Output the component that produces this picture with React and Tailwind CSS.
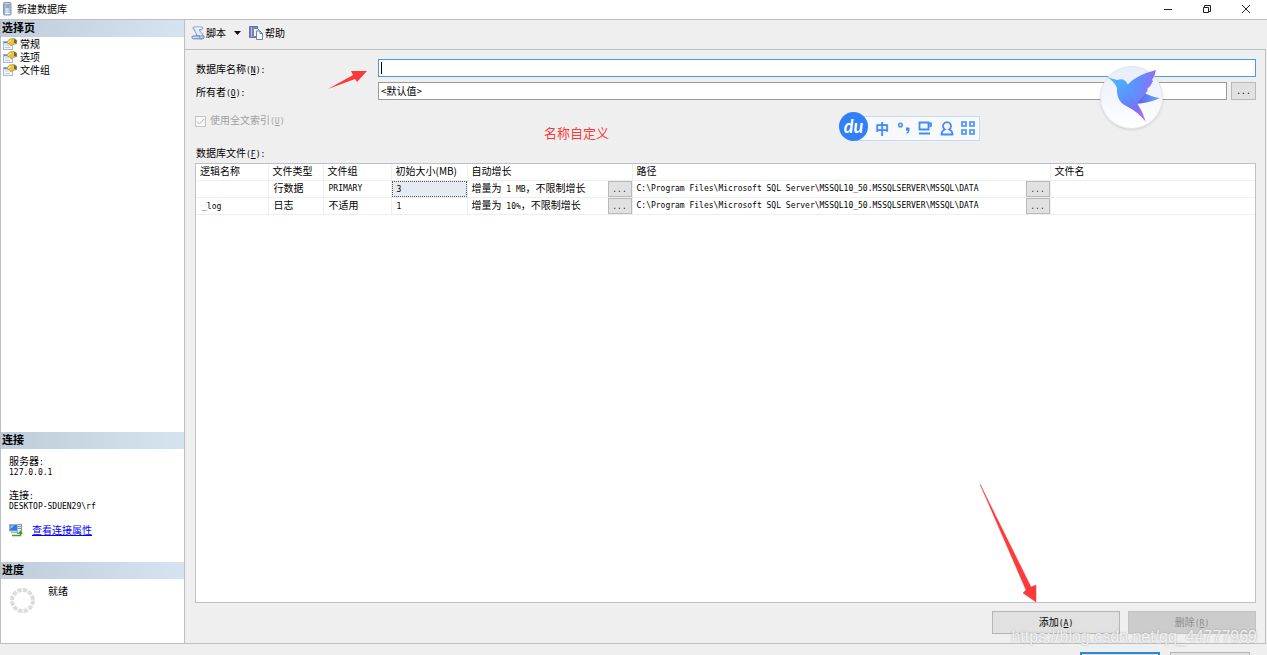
import React from 'react';

const pages = ['常规', '选项', '文件组'];

const columns = [
    { title: '逻辑名称', width: 'w-[72px]' },
    { title: '文件类型', width: 'w-[55px]' },
    { title: '文件组', width: 'w-[68px]' },
    { title: '初始大小(MB)', width: 'w-[76px]' },
    { title: '自动增长', width: 'w-[165px]' },
    { title: '路径', width: 'w-[418px]' },
    { title: '文件名', width: '' },
];

const path = 'C:\\Program Files\\Microsoft SQL Server\\MSSQL10_50.MSSQLSERVER\\MSSQL\\DATA';

const files = [
    { id: 1, name: '', type: '行数据', group: 'PRIMARY', latinGroup: true, size: 3, amount: '1 MB', selected: true },
    { id: 2, name: '_log', type: '日志', group: '不适用', latinGroup: false, size: 1, amount: '10%', selected: false },
];

// Latin text sits on half-width cells next to the full-width glyphs
function Mono({ children }) {
    return <span className="font-['DejaVu_Sans_Mono','Liberation_Mono',monospace] text-[8px]">{children}</span>;
}

function Hotkey({ letter }) {
    return <Mono>(<u>{letter}</u>)</Mono>;
}

function ServerIcon() {
    return (
        <svg width="9" height="14" viewBox="0 0 9 14">
            <defs>
                <linearGradient id="tower" x1="0" x2="1">
                    <stop offset="0" stopColor="#6d8bad" />
                    <stop offset="0.35" stopColor="#dbe8f4" />
                    <stop offset="1" stopColor="#9db4d2" />
                </linearGradient>
            </defs>
            <rect x="0.5" y="0.5" width="7.5" height="12.5" rx="1" fill="url(#tower)" stroke="#8299b8" />
            <path d="M2.5 3h4M2.5 5h4" stroke="#5f7fa8" />
            <path d="M2 11.5h5" stroke="#f4f8fc" />
        </svg>
    );
}

function PageIcon() {
    return (
        <svg width="14" height="12" viewBox="0 0 14 12">
            <rect x="0.5" y="3.5" width="9" height="8" fill="#f6f9fd" stroke="#a9b8cf" />
            <path d="M1 4.5h5" stroke="#5b86c4" strokeWidth="1.5" />
            <path d="M2 7h4M2 9.5h5" stroke="#b4c8e6" />
            <path d="M3.500 4.500 6.500 1l4.500-.5 2.500 1.500v3.500L10 6.500 8 8 6.500 6z" fill="#efc13d" stroke="#b08d35" strokeWidth="0.7" />
            <path d="M11 .7l2.600 1.500v3.500l-2.600-.7z" fill="#5c7045" />
            <path d="M5 4.500 8 2" stroke="#fff1a8" />
        </svg>
    );
}

function ScriptIcon() {
    return (
        <svg width="14" height="14" viewBox="0 0 14 14">
            <path d="M3 1h7.500c1.800 0 1.500 2.500 0 2.500H8.500C8.500 6 12 7 12 10H5.500C6 7 3.500 6 3.500 3.500 1.500 3.500 1.500 1 3 1z" fill="#dfeaf9" stroke="#7d97c6" />
            <path d="M2 10h7c-.8 1 0 2.800 1.500 2.800H2.500C.5 12.800.5 10 2 10z" fill="#cfdef2" stroke="#6581b2" />
            <path d="M12 9.500c1.800.3 1.500 3.300-.5 3.300H9.500" fill="#a9c0e2" stroke="#6581b2" />
            <path d="M4 2.200h6" stroke="#fff" />
        </svg>
    );
}

function HelpIcon() {
    return (
        <svg width="14" height="14" viewBox="0 0 14 14">
            <path d="M.5.500h8v11h-8z" fill="#7d7fbd" stroke="#6d70aa" />
            <path d="M2.500 1v10" stroke="#b4b6df" />
            <path d="M4.500 2.500h4l2 2v6h-6z" fill="#eef3fb" stroke="#7587b6" />
            <path d="M7.500 5h3.500l2.500 2.500v6h-6z" fill="#fff" stroke="#6c80ad" />
            <path d="M11 5v2.500h2.500" fill="none" stroke="#6c80ad" />
        </svg>
    );
}

function ConnectionIcon() {
    return (
        <svg width="14" height="14" viewBox="0 0 14 14">
            <rect x="8.500" y="1.500" width="4" height="9" fill="#e8edf3" stroke="#8794a6" />
            <path d="M9 3.500h3M9 5.500h3" stroke="#8794a6" />
            <rect x="0.500" y="1.500" width="8" height="6.500" fill="#2e7be0" stroke="#9db4cf" />
            <path d="M1.500 2.500h4l-4 3.500z" fill="#8fc0fa" />
            <path d="M2 9.500h6" stroke="#a9b4c2" strokeWidth="1.500" />
            <path d="M3 12.500h8.500V9M10 10.500 11.500 8.500 13 10.500" fill="none" stroke="#3aa527" strokeWidth="1.500" />
        </svg>
    );
}

function Bird() {
    return (
        <svg className="absolute -top-px left-0" width="64" height="64" viewBox="0 0 64 64">
            <defs>
                <linearGradient id="body" gradientUnits="userSpaceOnUse" x1="16" y1="12" x2="44" y2="56">
                    <stop offset="0" stopColor="#4fb2fd" />
                    <stop offset="0.45" stopColor="#5f8dfd" />
                    <stop offset="0.7" stopColor="#7e6cf8" />
                    <stop offset="1" stopColor="#d46ef2" />
                </linearGradient>
                <linearGradient id="wing" gradientUnits="userSpaceOnUse" x1="24" y1="20" x2="52" y2="24">
                    <stop offset="0" stopColor="#52a2fd" />
                    <stop offset="0.5" stopColor="#648bfc" />
                    <stop offset="1" stopColor="#8f6ff6" />
                </linearGradient>
                <linearGradient id="tail" x1="0" x2="1">
                    <stop offset="0" stopColor="#6652ea" />
                    <stop offset="1" stopColor="#5ab0fb" />
                </linearGradient>
            </defs>
            <path d="M34 37 42 26Q50 31 59 32 49 37 34 38z" fill="url(#tail)" />
            <path d="M6 11Q12 13 16 14 24 11 27 19L44 24 36 37Q42 46 45 56 37 46 27 41 15 36 16 22 14 16 6 11z" fill="url(#body)" />
            <path d="M26 19Q35 9 55 4 54 10 51 14L52 15Q50 20 46 23L47 24Q42 31 36 37 28 31 26 19z" fill="url(#wing)" />
        </svg>
    );
}

function SectionTitle({ children }) {
    return (
        <h2 className="h-[17px] shrink-0 bg-linear-to-r from-[#bfccd9] to-[#d6e4f2] pl-px text-[11px] leading-[14px] font-bold">
            {children}
        </h2>
    );
}

function MoreButton() {
    return (
        <button type="button" aria-label="更多" className="h-4 w-6 shrink-0 border border-[#b9b9b9] bg-[#e1e1e1] leading-3 text-[#333]">
            <Mono>...</Mono>
        </button>
    );
}

function Sidebar() {
    return (
        <aside className="flex w-[185px] shrink-0 flex-col border-x border-b border-[#bcbfc4] bg-white">
            <SectionTitle>选择页</SectionTitle>
            <ul className="flex-1 pl-0.5">
                {pages.map((page, i) => (
                    <li key={page} className="flex h-[13px] items-center gap-[3px] leading-[13px]">
                        <PageIcon />
                        <a href="#" className={i === 0 ? 'bg-[#f2f2f2]' : ''}>{page}</a>
                    </li>
                ))}
            </ul>

            <SectionTitle>连接</SectionTitle>
            <div className="h-[113px] shrink-0 px-2 pt-[7px]">
                <div className="h-[10px] leading-[10px]">服务器<Mono>:</Mono></div>
                <div className="h-[10px] leading-[10px]"><Mono>127.0.0.1</Mono></div>
                <div className="mt-3.5 h-[10px] leading-[10px]">连接<Mono>:</Mono></div>
                <div className="h-[10px] leading-[10px]"><Mono>DESKTOP-SDUEN29\rf</Mono></div>
                <div className="mt-3 flex items-center gap-[9px]">
                    <ConnectionIcon />
                    <a href="#" className="text-[#0000ff] underline">查看连接属性</a>
                </div>
            </div>

            <SectionTitle>进度</SectionTitle>
            <div className="flex h-16 shrink-0 gap-3 px-2 pt-1">
                <svg className="mt-1" width="27" height="27" viewBox="0 0 27 27">
                    <circle cx="13.500" cy="13.500" r="10.500" fill="none" stroke="#dcdcdc" strokeWidth="4" strokeDasharray="4.300 1.200" />
                </svg>
                <span className="leading-4">就绪</span>
            </div>
        </aside>
    );
}

function FilesTable() {
    return (
        <div className="flex-1 border border-[#bfc1c6] bg-white">
            <table className="w-full table-fixed border-collapse text-left leading-3">
                <thead>
                    <tr className="h-4">
                        {columns.map(col => (
                            <th key={col.title} className={`${col.width} border-r border-b border-[#eeeeee] p-0 pb-0.5 pl-1 font-normal whitespace-nowrap last:border-r-0`}>
                                {col.title}
                            </th>
                        ))}
                    </tr>
                </thead>
                <tbody>
                    {files.map(file => (
                        <tr key={file.id} className="h-[17px]">
                            <td className="border-r border-b border-[#eeeeee] p-0 pl-1.5"><Mono>{file.name}</Mono></td>
                            <td className="border-r border-b border-[#eeeeee] p-0 pb-0.5 pl-[5px]">{file.type}</td>
                            <td className="border-r border-b border-[#eeeeee] p-0 pb-0.5 pl-[5px]">
                                {file.latinGroup ? <Mono>{file.group}</Mono> : file.group}
                            </td>
                            <td className="border-r border-b border-[#eeeeee] p-0">
                                <div className={file.selected
                                    ? 'h-4 border border-dotted border-[#555] bg-[#e6ebf1] pl-1'
                                    : 'pl-[5px]'}
                                >
                                    <Mono>{file.size}</Mono>
                                </div>
                            </td>
                            <td className="border-r border-b border-[#eeeeee] p-0 pl-1">
                                <div className="flex items-center justify-between whitespace-nowrap">
                                    <span>增量为<Mono> {file.amount}</Mono>，不限制增长</span>
                                    <MoreButton />
                                </div>
                            </td>
                            <td className="border-r border-b border-[#eeeeee] p-0 pl-1">
                                <div className="flex items-center justify-between whitespace-nowrap">
                                    <Mono>{path}</Mono>
                                    <MoreButton />
                                </div>
                            </td>
                            <td className="border-b border-[#eeeeee] p-0"></td>
                        </tr>
                    ))}
                </tbody>
            </table>
        </div>
    );
}

// Baidu input method bar floating above the dialog
function InputMethodBar() {
    return (
        <div className="absolute top-[62px] right-[285px] flex items-center">
            <span className="z-10 flex size-[29px] items-center justify-center rounded-full bg-[#2f80fa] pb-0.5 font-['Lato',sans-serif] text-lg leading-none font-bold text-white italic">
                du
            </span>
            <div className="mt-[3px] -ml-3 flex h-[25px] w-[124px] items-center justify-between border border-[#c5d9f7] bg-[#f8f9fc] pr-1 pl-[18px] text-[#3f8bfa]">
                <span className="text-sm leading-none font-bold">中</span>
                <svg width="14" height="14" viewBox="0 0 14 14">
                    <circle cx="3.500" cy="4" r="1.800" fill="none" stroke="currentColor" strokeWidth="1.500" />
                    <path d="M9 6.500h3.500v2.500c0 2-1 3.200-2.800 3.700l-.5-1c1-.4 1.500-1 1.600-2H9z" fill="currentColor" />
                </svg>
                <svg width="14" height="14" viewBox="0 0 14 14" fill="none" stroke="currentColor" strokeWidth="1.800">
                    <path d="M1.500 1.500h9v7h-9zM10.500 2.500H13v2.500l-2.500 1M1 12.500h11" />
                </svg>
                <svg width="14" height="15" viewBox="0 0 14 15" fill="none" stroke="currentColor" strokeWidth="1.800">
                    <path d="M4.800 8.500a4 4 0 1 1 4.400 0c2 .8 3.300 2.500 3.300 5h-11c0-2.500 1.300-4.200 3.300-5z" />
                </svg>
                <svg width="14" height="14" viewBox="0 0 14 14" fill="none" stroke="currentColor" strokeWidth="1.600">
                    <path d="M1 1h4v4H1zM9 1h4v4H9zM1 9h4v4H1zM9 9h4v4H9z" />
                </svg>
            </div>
        </div>
    );
}

function GeneralPage() {
    return (
        <section className="relative flex flex-1 flex-col border-t border-r border-b border-[#bcbfc4] pt-[9px] pr-[9px] pb-[9px] pl-2.5">
            <div className="flex h-[18px] items-start">
                <label htmlFor="db-name" className="w-[183px] pl-px leading-5">数据库名称<Hotkey letter="N" /><Mono>:</Mono></label>
                <div className="flex h-[18px] flex-1 items-center border border-[#4a9de0] bg-white pl-0.5">
                    <span className="h-3 w-px bg-black"></span>
                    <input id="db-name" type="text" className="w-full bg-transparent outline-none" />
                </div>
            </div>
            <div className="mt-[5px] flex h-[18px] items-start">
                <label htmlFor="owner" className="w-[183px] pl-px leading-5">所有者<Hotkey letter="O" /><Mono>:</Mono></label>
                <input id="owner" type="text" defaultValue="<默认值>" className="h-[18px] flex-1 border border-[#9a9a9a] bg-white px-0.5 pb-0.5 outline-none" />
                <button type="button" aria-label="选择所有者" className="ml-1 h-[18px] w-[25px] border border-[#b9b9b9] bg-[#e1e1e1] leading-3">
                    <Mono>...</Mono>
                </button>
            </div>
            <div className="mt-[13px] flex h-4 items-center gap-1">
                <input id="fulltext" type="checkbox" defaultChecked disabled className="size-[11px] appearance-none border border-[#c4c4c4] bg-[#f8f8f8]" />
                <svg className="-ml-[14px] mr-px" width="9" height="9" viewBox="0 0 9 9">
                    <path d="M1 4.500 3.500 7 8 2" fill="none" stroke="#b5b5b5" />
                </svg>
                <label htmlFor="fulltext" className="text-[#a0a0a0]">使用全文索引<Hotkey letter="U" /></label>
            </div>
            <div className="mt-4 h-[18px] pl-px leading-4">数据库文件<Hotkey letter="F" /><Mono>:</Mono></div>
            <FilesTable />
            <div className="mt-2 flex justify-end gap-2">
                <button type="button" className="h-[23px] w-32 border border-[#b5b5b5] bg-[#e1e1e1]">添加<Hotkey letter="A" /></button>
                <button type="button" disabled className="h-[23px] w-32 border border-[#c3c3c3] bg-[#cccccc] text-[#8c8c8c]">删除<Hotkey letter="R" /></button>
            </div>

            <svg className="absolute top-5 left-[143px]" width="40" height="20" viewBox="0 0 40 20">
                <path d="M0 19 25 5 23 1 39 1 29 12 27 9z" fill="#fb3b3b" />
            </svg>
            <span className="absolute top-[75px] left-[359px] text-[13px] leading-4 text-[#fb3b3b]">名称自定义</span>
            <InputMethodBar />
            <div className="absolute top-4 right-[102px] size-[63px] rounded-full border border-[#e2e4e8] bg-linear-to-b from-[#e6edfb] to-white shadow-sm">
                <Bird />
            </div>
            <svg className="absolute right-[227px] bottom-10" width="58" height="120" viewBox="0 0 58 120">
                <path d="M0 1 51 104 56 102 56 119 43 110 46 107z" fill="#fb3b3b" stroke="#fb3b3b" strokeWidth="0.5" />
            </svg>
        </section>
    );
}

export default function App() {
    return (
        <div className="relative flex h-screen flex-col overflow-hidden bg-[#efefef] font-['Noto_Sans_CJK_SC',sans-serif] text-[10px] leading-4 text-black">
            <header className="flex h-5 shrink-0 items-center justify-between border-b border-[#bcbfc4] bg-white pr-4 pb-px pl-[3px]">
                <h1 className="flex items-center gap-[5px]"><ServerIcon />新建数据库</h1>
                <div className="flex items-center gap-[29px] text-[#222]">
                    <button type="button" aria-label="最小化">
                        <svg width="10" height="10" viewBox="0 0 10 10"><path d="M1 5.500h8" stroke="currentColor" /></svg>
                    </button>
                    <button type="button" aria-label="还原">
                        <svg width="10" height="10" viewBox="0 0 10 10" fill="none" stroke="currentColor">
                            <path d="M1.500 3.500h5v5h-5zM2.500 3V1.500h6v6H7" />
                        </svg>
                    </button>
                    <button type="button" aria-label="关闭">
                        <svg width="10" height="10" viewBox="0 0 10 10"><path d="M1 1l8 8M9 1 1 9" stroke="currentColor" /></svg>
                    </button>
                </div>
            </header>

            <div className="flex min-h-0 flex-1">
                <Sidebar />
                <main className="flex min-w-0 flex-1 flex-col pr-px">
                    <nav className="flex h-[29px] shrink-0 items-center pb-[3px] pl-1.5">
                        <button type="button" className="flex items-center gap-px"><ScriptIcon />脚本</button>
                        <button type="button" aria-label="脚本选项" className="px-2">
                            <svg width="7" height="4" viewBox="0 0 7 4"><path d="M0 0h7L3.500 4z" fill="#111" /></svg>
                        </button>
                        <button type="button" className="flex items-center gap-0.5"><HelpIcon />帮助</button>
                    </nav>
                    <GeneralPage />
                </main>
            </div>

            <footer className="flex h-[11px] shrink-0 items-start justify-end gap-2.5 pt-2 pr-[17px]">
                <button type="button" aria-label="确定" className="h-[23px] w-20 shrink-0 border-2 border-[#2b88d8] bg-[#e1e1e1]"></button>
                <button type="button" aria-label="取消" className="h-[23px] w-20 shrink-0 border border-[#b5b5b5] bg-[#e1e1e1]"></button>
            </footer>

            <span className="pointer-events-none absolute right-2.5 bottom-1.5 font-['Liberation_Sans',sans-serif] text-base leading-6 text-white/80 [text-shadow:0_0_2px_#999]">
                https://blog.csdn.net/qq_44777969
            </span>
        </div>
    );
}
